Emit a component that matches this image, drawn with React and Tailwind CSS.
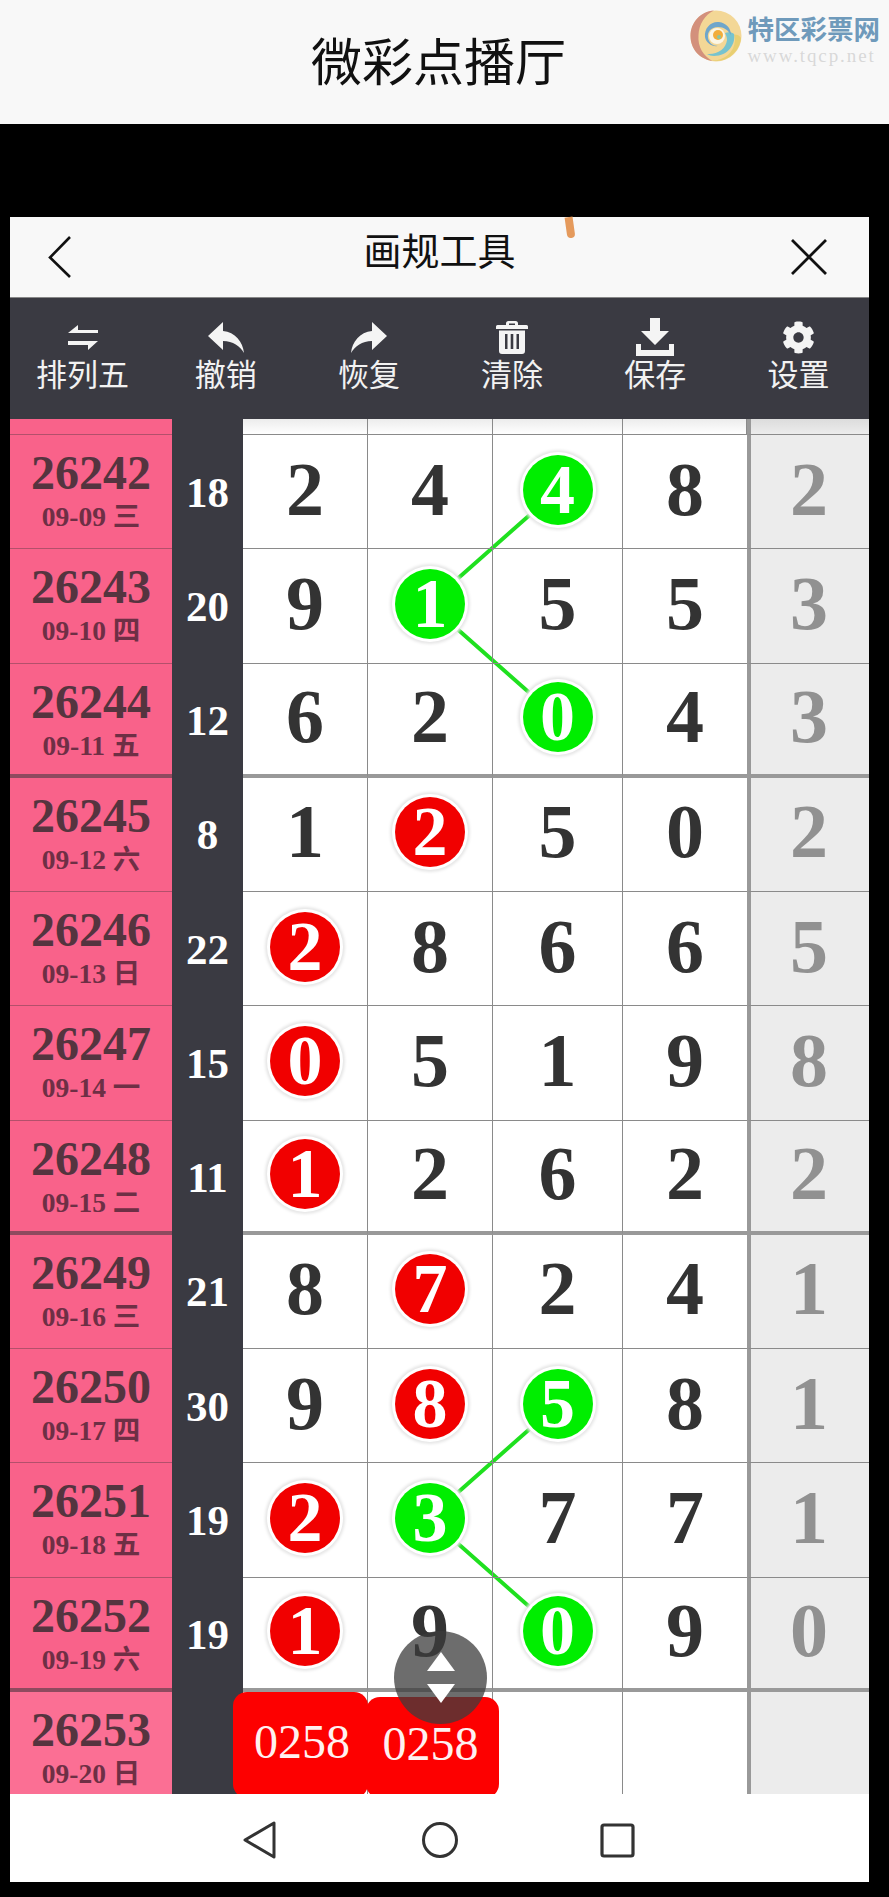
import { FaCog } from "react-icons/fa";

const SANS = "font-['Noto_Sans_CJK_SC','Noto_Sans',sans-serif]";
const SERIF = "font-['Liberation_Serif','Noto_Sans_CJK_SC',serif]";

const rows = [
  { id: "26242", date: "09-09", day: "三", sum: "18", nums: ["2", "4", "4g", "8"], last: "2" },
  { id: "26243", date: "09-10", day: "四", sum: "20", nums: ["9", "1g", "5", "5"], last: "3" },
  { id: "26244", date: "09-11", day: "五", sum: "12", nums: ["6", "2", "0g", "4"], last: "3", heavy: true },
  { id: "26245", date: "09-12", day: "六", sum: "8", nums: ["1", "2r", "5", "0"], last: "2" },
  { id: "26246", date: "09-13", day: "日", sum: "22", nums: ["2r", "8", "6", "6"], last: "5" },
  { id: "26247", date: "09-14", day: "一", sum: "15", nums: ["0r", "5", "1", "9"], last: "8" },
  { id: "26248", date: "09-15", day: "二", sum: "11", nums: ["1r", "2", "6", "2"], last: "2", heavy: true },
  { id: "26249", date: "09-16", day: "三", sum: "21", nums: ["8", "7r", "2", "4"], last: "1" },
  { id: "26250", date: "09-17", day: "四", sum: "30", nums: ["9", "8r", "5g", "8"], last: "1" },
  { id: "26251", date: "09-18", day: "五", sum: "19", nums: ["2r", "3g", "7", "7"], last: "1" },
  { id: "26252", date: "09-19", day: "六", sum: "19", nums: ["1r", "9", "0g", "9"], last: "0", heavy: true },
  { id: "26253", date: "09-20", day: "日", sum: "", nums: ["", "", "", ""], last: "" },
];

const COLS = "grid grid-cols-[162px_71px_125px_125px_130px_124px_122px]";

function Logo() {
  return (
    <div className="flex items-start gap-[6px] pt-[10px] ml-auto mr-[9px]">
      <svg width="52" height="52" viewBox="0 0 52 52" fill="none">
        <circle cx="26" cy="26" r="25.500" fill="#f3d796" />
        <path d="M24 .6C10 1.500.5 13 .5 26c0 13 9 23 22 25-9-5-15-14-14-26C9 14 15 5 24 .6z" fill="#d3907c" />
        <path d="M51 28c-1 12-11 23-25 23-2 0-3 0-4-.5 13 0 22-8 23-20 0-2 0-4-1-6 3 0 6 1 7 3.500z" fill="#e8cf72" />
        <path d="M44 24c2 10-6 22-20 22-3 0-5-1-7-2 10 1 19-5 20-14 0-3-1-5-2-7 3-1 7-1 9 1z" fill="#76c3cf" />
        <path d="M15 27c-1-9 6-16 14-15 7 1 12 6 12 13-3-5-7-8-13-8-7 0-11 5-10 11 1 5 5 8 10 8-6 1-12-3-13-9z" fill="#6fa6cb" />
        <circle cx="27" cy="26" r="8" fill="#fbf6e6" />
        <circle cx="28" cy="25" r="5" fill="#f2ad3a" />
        <circle cx="29" cy="27" r="2" fill="#8cc6a0" />
      </svg>
      <div className="flex flex-col pt-[3px]">
        <div className={`${SANS} font-bold text-[26.5px] leading-[30px] text-[#6f9abb] whitespace-nowrap`}>特区彩票网</div>
        <div className={`${SERIF} text-[19px] leading-[20px] tracking-[1.9px] text-[#d8d8d8] whitespace-nowrap mt-[3px]`}>www.tqcp.net</div>
      </div>
    </div>
  );
}

function SwapIcon() {
  return (
    <svg width="30" height="25" viewBox="0 0 30 25" fill="#f4f4f4">
      <path d="M0 8 10 0v5h20v3z" />
      <path d="M0 16h30l-10 9v-5H0z" />
    </svg>
  );
}

function UndoIcon({ flip }) {
  return (
    <svg width="36" height="31" viewBox="0 0 36 31" fill="#f4f4f4" className={flip ? "-scale-x-100" : ""}>
      <path d="M0 14 15 0v9c12 1 20 11 21 22-4-7-11-12-21-12v9z" />
    </svg>
  );
}

function TrashIcon() {
  return (
    <svg width="32" height="33" viewBox="0 0 32 33" fill="#f4f4f4">
      <path d="M10 4V2.500A2.500 2.500 0 0 1 12.500 0h7A2.500 2.500 0 0 1 22 2.500V4h8.500A1.500 1.500 0 0 1 32 5.500V8H0V5.500A1.500 1.500 0 0 1 1.500 4zm3 0h6V2.500h-6z" />
      <path fillRule="evenodd" d="M3 9.500h26V30a3 3 0 0 1-3 3H6a3 3 0 0 1-3-3zM9 13v15h2.500V13zm5.700 0v15h2.600V13zm5.800 0v15H23V13z" />
    </svg>
  );
}

function SaveIcon() {
  return (
    <svg width="38" height="38" viewBox="0 0 38 38" fill="#f4f4f4">
      <path d="M14 0h10v13h9L19 27 5 13h9z" />
      <path d="M0 26h5v6h28v-6h5v12H0z" />
    </svg>
  );
}

const tools = [
  { label: "排列五", icon: <SwapIcon /> },
  { label: "撤销", icon: <UndoIcon /> },
  { label: "恢复", icon: <UndoIcon flip /> },
  { label: "清除", icon: <TrashIcon /> },
  { label: "保存", icon: <SaveIcon /> },
  { label: "设置", icon: <FaCog className="text-[33px] text-[#f4f4f4]" /> },
];

function Cell({ value, heavy, wide }) {
  const color = value.slice(1);
  const digit = value.slice(0, 1);
  return (
    <div className={`flex items-center justify-center border-[#8a8a8a] ${wide ? "" : "border-r"} ${heavy ? "border-b-4 border-b-[#999999]" : "border-b"}`}>
      {color ? (
        <div
          className={`flex h-[70px] w-[70px] items-center justify-center rounded-full text-white text-[70px] leading-none shadow-[0_0_0_3px_#ffffff,0_0_3px_5px_#e6e6e6] -translate-y-[2px] ${color === "g" ? "bg-[#00ee00]" : "bg-[#f10000]"}`}
        >
          {digit}
        </div>
      ) : (
        <span className="-translate-y-[3px] text-[76px] leading-none text-[#333333]">{digit}</span>
      )}
    </div>
  );
}

export default function App() {
  return (
    <div className="w-[889px] h-[1897px] bg-black overflow-hidden">
      <div className="flex h-[124px] bg-[#f8f8f8]">
        <div className={`${SANS} pl-[311px] pt-[29px] text-[51px] leading-[60px] text-[#111111] whitespace-nowrap`}>微彩点播厅</div>
        <Logo />
      </div>
      <div className="h-[93px]" />
      <div className="ml-[10px] w-[859px]">
        <div className="relative flex h-[81px] items-center justify-between bg-[#f8f8f8] border-b border-[#888888] pl-[37px] pr-[42px]">
          <svg width="25" height="44" viewBox="0 0 25 44" fill="none" stroke="#111111" strokeWidth="2.600">
            <path d="M23 2 3 22.500 23 42" />
          </svg>
          <div className={`${SANS} translate-x-[8px] -translate-y-[8px] text-[38px] leading-[46px] text-[#111111] whitespace-nowrap`}>画规工具</div>
          <svg width="36" height="36" viewBox="0 0 36 36" fill="none" stroke="#111111" strokeWidth="2.800">
            <path d="M1 1l34 34M35 1 1 35" />
          </svg>
          <div className="absolute left-[556px] top-0 h-[21px] w-[8px] rotate-[-8deg] rounded-b-full bg-[#e59a5c]" />
        </div>

        <div className="grid h-[121px] grid-cols-6 bg-[#3a3a42] pt-[20px]">
          {tools.map((t) => (
            <div key={t.label} className="flex flex-col items-center translate-x-[1px]">
              <div className="flex h-[38px] items-center justify-center">{t.icon}</div>
              <div className={`${SANS} -mt-[3px] text-[31px] leading-[40px] text-[#f2f2f2] whitespace-nowrap`}>{t.label}</div>
            </div>
          ))}
        </div>

        <div className={`${SERIF} relative h-[1375px] overflow-hidden bg-white font-bold`}>
          <svg width="859" height="1375" className="absolute left-0 top-0" fill="none" stroke="#1fe01f" strokeWidth="4">
            <path d="M548 71 419 185 548 299" />
            <path d="M548 985 419 1099 548 1213" />
          </svg>

          <div className={`${COLS} relative h-[16px]`}>
            <div className="bg-[#f9628a] border-b border-[#b3506b]" />
            <div className="bg-[#3a3a42]" />
            {[0, 1, 2, 3].map((i) => (
              <div key={i} className="border-r border-b border-[#8a8a8a] bg-gradient-to-b from-[#ececec] to-white" />
            ))}
            <div className="border-b border-[#8a8a8a] border-l-4 border-l-[#999999] bg-gradient-to-b from-[#dcdcdc] to-[#ececec]" />
          </div>

          {rows.map((r, i) => (
            <div key={r.id} className={`${COLS} relative h-[114.27px]`}>
              <div className={`flex flex-col items-center pt-[10px] ${i === 11 ? "bg-[#fb6f94]" : "bg-[#f9628a]"} ${r.heavy ? "border-b-4 border-[#8f4a5f]" : "border-b border-[#b3506b]"}`}>
                <div className="text-[48px] leading-[56px] text-[#55343f]">{r.id}</div>
                <div className="text-[27.5px] leading-[30px] mt-[1px] text-[#6e2f45] whitespace-nowrap">{r.date} {r.day}</div>
              </div>
              <div className="flex items-center justify-center bg-[#3a3a42] text-white text-[43px] leading-none">{r.sum}</div>
              {r.nums.map((n, j) => (
                <Cell key={j} value={n} heavy={r.heavy} wide={j === 3} />
              ))}
              <div className={`flex items-center justify-center bg-[#ececec] border-l-4 border-l-[#999999] text-[76px] leading-none text-[#919191] ${r.heavy ? "border-b-4 border-b-[#999999]" : "border-b border-b-[#8a8a8a]"}`}>
                <span className="-translate-y-[3px] -translate-x-[1px]">{r.last}</span>
              </div>
            </div>
          ))}

          {/* red tags sitting on the last row */}
          <div className="absolute left-[223px] top-[1273px] flex h-[106px] w-[135px] items-center justify-center rounded-[14px] bg-[#fd0000] pb-[6px] pl-[3px] text-[48px] font-normal text-[#fff0f0]">0258</div>
          <div className="absolute left-[356px] top-[1278px] flex h-[101px] w-[133px] items-center justify-center rounded-[14px] bg-[#fd0000] pb-[7px] pr-[4px] text-[48px] font-normal text-[#fff0f0]">0258</div>

          {/* floating scroll button */}
          <div className="absolute left-[384px] top-[1212px] flex h-[93px] w-[93px] flex-col items-center justify-center gap-[13px] rounded-full bg-[#3c3c3c]/75">
            <svg width="28" height="19" viewBox="0 0 28 19" fill="#ffffff"><path d="M14 0l14 19H0z" /></svg>
            <svg width="28" height="19" viewBox="0 0 28 19" fill="#ffffff"><path d="M0 0h28L14 19z" /></svg>
          </div>
        </div>

        <div className="flex h-[88px] items-center bg-white pl-[233px] pt-[4px]">
          <svg width="34" height="38" viewBox="0 0 34 38" fill="none" stroke="#333333" strokeWidth="3" strokeLinejoin="round">
            <path d="M31 2v34L2 19z" />
          </svg>
          <svg width="38" height="38" viewBox="0 0 38 38" fill="none" stroke="#333333" strokeWidth="3" className="ml-[144px]">
            <circle cx="19" cy="19" r="16.500" />
          </svg>
          <svg width="35" height="35" viewBox="0 0 35 35" fill="none" stroke="#333333" strokeWidth="3.200" className="ml-[141px]">
            <rect x="2" y="2" width="31" height="31" rx="2" />
          </svg>
        </div>
      </div>
    </div>
  );
}
